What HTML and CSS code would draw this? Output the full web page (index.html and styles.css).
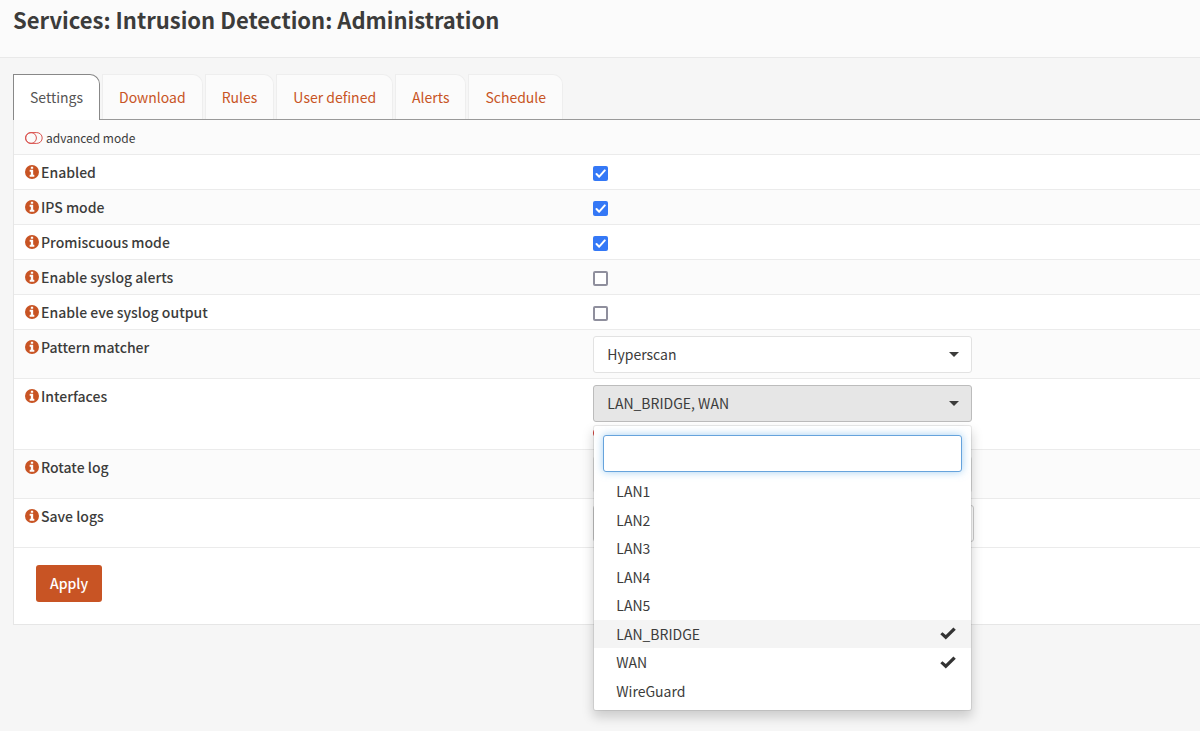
FILE: index.html
```html
<!DOCTYPE html>
<html lang="en">
<head>
<meta charset="utf-8">
<title>Services: Intrusion Detection: Administration</title>
<link rel="stylesheet" href="styles.css">
</head>
<body>
<svg class="sprite" aria-hidden="true">
  <symbol id="info" viewBox="0 0 1536 1536"><path fill-rule="evenodd" d="M768 0a768 768 0 1 0 0 1536A768 768 0 0 0 768 0zM992 1280H544q-32 0-32-32v-160q0-32 32-32h96V736h-96q-32 0-32-32V544q0-32 32-32h320q32 0 32 32v512h96q32 0 32 32v160q0 32-32 32zM864 416H672q-32 0-32-32V224q0-32 32-32h192q32 0 32 32v160q0 32-32 32z"/></symbol>
  <symbol id="tick" viewBox="0 0 16 13"><path d="M2.4 5.2 0.3 7.3 5.8 12.6 15.8 2.7 13.4 0.4 5.8 8Z"/></symbol>
</svg>
<header class="page-head"><h1>Services: Intrusion Detection: Administration</h1></header>
<main class="content">
  <nav class="tabs">
    <a class="tab active" href="#settings">Settings</a>
    <a class="tab" href="#download">Download</a>
    <a class="tab" href="#rules">Rules</a>
    <a class="tab" href="#user">User defined</a>
    <a class="tab" href="#alerts">Alerts</a>
    <a class="tab" href="#schedule">Schedule</a>
  </nav>
  <form class="panel">
    <div class="advanced">
      <button class="mode" type="button">
        <svg class="toggle" viewBox="0 0 18 12"><rect x=".6" y=".6" width="16.6" height="10.8" rx="5.4"/><circle cx="6" cy="6" r="5.4"/></svg>
        advanced mode
      </button>
    </div>
    <div class="row"><label for="enabled"><svg class="info"><use href="#info"/></svg>Enabled</label><div class="field"><input class="check" type="checkbox" id="enabled" checked></div></div>
    <div class="row shade"><label for="ips"><svg class="info"><use href="#info"/></svg>IPS mode</label><div class="field"><input class="check" type="checkbox" id="ips" checked></div></div>
    <div class="row"><label for="promisc"><svg class="info"><use href="#info"/></svg>Promiscuous mode</label><div class="field"><input class="check" type="checkbox" id="promisc" checked></div></div>
    <div class="row shade"><label for="syslog"><svg class="info"><use href="#info"/></svg>Enable syslog alerts</label><div class="field"><input class="check" type="checkbox" id="syslog"></div></div>
    <div class="row"><label for="eve"><svg class="info"><use href="#info"/></svg>Enable eve syslog output</label><div class="field"><input class="check" type="checkbox" id="eve"></div></div>
    <div class="row shade"><label for="matcher"><svg class="info"><use href="#info"/></svg>Pattern matcher</label>
      <div class="field"><div class="picker"><select class="control" id="matcher"><option>Hyperscan</option></select></div></div></div>
    <div class="row"><label for="interfaces"><svg class="info"><use href="#info"/></svg>Interfaces</label>
      <div class="field">
        <div class="picker open">
          <button class="control" type="button" id="interfaces" aria-haspopup="listbox" aria-expanded="true">LAN_BRIDGE, WAN</button>
          <div class="menu">
            <input class="search" type="text" aria-label="Search interfaces">
            <ul class="options" role="listbox" aria-multiselectable="true">
              <li role="option">LAN1</li>
              <li role="option">LAN2</li>
              <li role="option">LAN3</li>
              <li role="option">LAN4</li>
              <li role="option">LAN5</li>
              <li role="option" class="hover" aria-selected="true">LAN_BRIDGE<svg class="tick"><use href="#tick"/></svg></li>
              <li role="option" aria-selected="true">WAN<svg class="tick"><use href="#tick"/></svg></li>
              <li role="option">WireGuard</li>
            </ul>
          </div>
        </div>
        <button class="clear" type="button" aria-label="Clear All"></button>
      </div></div>
    <div class="row shade"><label for="rotate"><svg class="info"><use href="#info"/></svg>Rotate log</label>
      <div class="field"><div class="picker"><select class="control" id="rotate"><option></option></select></div></div></div>
    <div class="row"><label for="save"><svg class="info"><use href="#info"/></svg>Save logs</label>
      <div class="field"><input class="control text" type="text" id="save"></div></div>
    <div class="actions"><button class="apply" type="submit">Apply</button></div>
  </form>
</main>
</body>
</html>
```
FILE: styles.css
```css
* { box-sizing: border-box; }
body {
  min-height: 100vh;
  margin: 0;
  background: #f6f6f6;
  color: #3c3c3b;
  font: 14px/20px "Noto Sans CJK SC", "Open Sans", sans-serif;
}
button, input, select { font: inherit; color: inherit; }
.sprite { display: none; }

.page-head {
  padding: 4px 13px 23px;
  background: #fbfbfb;
  border-bottom: 1px solid #e9e9e9;
}
h1 { margin: 0; font-size: 22px; line-height: 30px; font-weight: 700; }

.content { padding: 16px 0 24px 13px; }
.tabs {
  display: flex;
  gap: 2px;
  border-bottom: 1px solid #999;
}
.tab {
  padding: 12px 16px;
  background: #fbfbfb;
  border: 1px solid #eee;
  border-bottom: 0;
  border-top-right-radius: 10px;
  color: #c85424;
  text-decoration: none;
}
.tab.active {
  margin-bottom: -1px;
  background: #fff;
  border-color: #888;
  color: #555;
}

.panel {
  background: #fff;
  border: solid #e6e6e6;
  border-width: 0 0 1px 1px;
}
.advanced { padding: 8px 11px 6px; background: #fbfbfb; }
.mode {
  display: flex;
  align-items: center;
  gap: 3px;
  padding: 0;
  border: 0;
  background: none;
  font-size: 12px;
}
.toggle { width: 18px; height: 12px; fill: none; stroke: #d9534f; }

.row {
  display: flex;
  border-top: 1px solid #ebebeb;
}
.shade { background: #fbfbfb; }
.row label {
  display: flex;
  align-items: flex-start;
  gap: 2px;
  width: 48%;
  padding: 7px 11px;
  font-weight: 500;
}
.info { width: 14px; height: 14px; margin-top: 3px; fill: #c85424; }
.field { flex: 1; padding: 6px 10px 5px; }

.check {
  display: block;
  width: 15px;
  height: 15px;
  margin: 5px 0 3px;
  appearance: none;
  border: 2px solid #8f8f9d;
  border-radius: 2px;
  background: #fff;
}
.check:checked {
  border: 0;
  background: #3478f6 url("data:image/svg+xml,%3Csvg xmlns='http://www.w3.org/2000/svg' viewBox='0 0 15 15'%3E%3Cpath d='M3.5 8 6.2 10.7 11.8 4.4' fill='none' stroke='white' stroke-width='2' stroke-linecap='round' stroke-linejoin='round'/%3E%3C/svg%3E");
}

.picker { position: relative; max-width: 379px; }
.picker::after {
  content: "";
  position: absolute;
  top: 16px;
  right: 13px;
  border: solid transparent;
  border-width: 5px 5px 0;
  border-top-color: #3c3c3b;
  pointer-events: none;
}
.control {
  display: block;
  width: 100%;
  height: 37px;
  padding: 0 13px 2px;
  appearance: none;
  border: 1px solid #e2e2e2;
  border-radius: 3px;
  background: #fff;
  text-align: left;
}
.open .control { background: #e6e6e6; border-color: #bcbcbc; }
.control.text { max-width: 381px; border-color: #ccc; }
.clear {
  display: block;
  width: 12px;
  height: 12px;
  margin: 5px 0;
  padding: 0;
  border: 0;
  border-radius: 50%;
  background: #d93a34;
}

.menu {
  position: absolute;
  z-index: 1;
  top: 40px;
  left: 0;
  width: 100%;
  padding: 9px 0 5px;
  background: #fff;
  border: 1px solid rgba(0, 0, 0, .08);
  border-radius: 3px;
  background-clip: padding-box;
  box-shadow: 0 6px 12px rgba(0, 0, 0, .175);
}
.search {
  display: block;
  width: calc(100% - 18px);
  height: 37px;
  margin: 0 9px 5px;
  padding: 0 12px;
  border: 1px solid #66a3dc;
  border-radius: 3px;
  background: #fff;
  box-shadow: 0 0 8px rgba(102, 175, 233, .6);
}
.options {
  display: grid;
  grid-auto-rows: 1fr;
  height: 228px;
  margin: 0;
  padding: 0;
  list-style: none;
}
.options li {
  display: flex;
  align-items: center;
  justify-content: space-between;
  padding: 0 15px 0 22px;
}
.options .hover { background: #f4f4f4; }
.tick { width: 16px; height: 13px; fill: #333; }

.actions { padding: 17px 22px 22px; border-top: 1px solid #ebebeb; }
.apply {
  height: 37px;
  padding: 0 14px 2px;
  border: 0;
  border-radius: 3px;
  background: #c85424;
  color: #fff;
  font-weight: 500;
}
```
